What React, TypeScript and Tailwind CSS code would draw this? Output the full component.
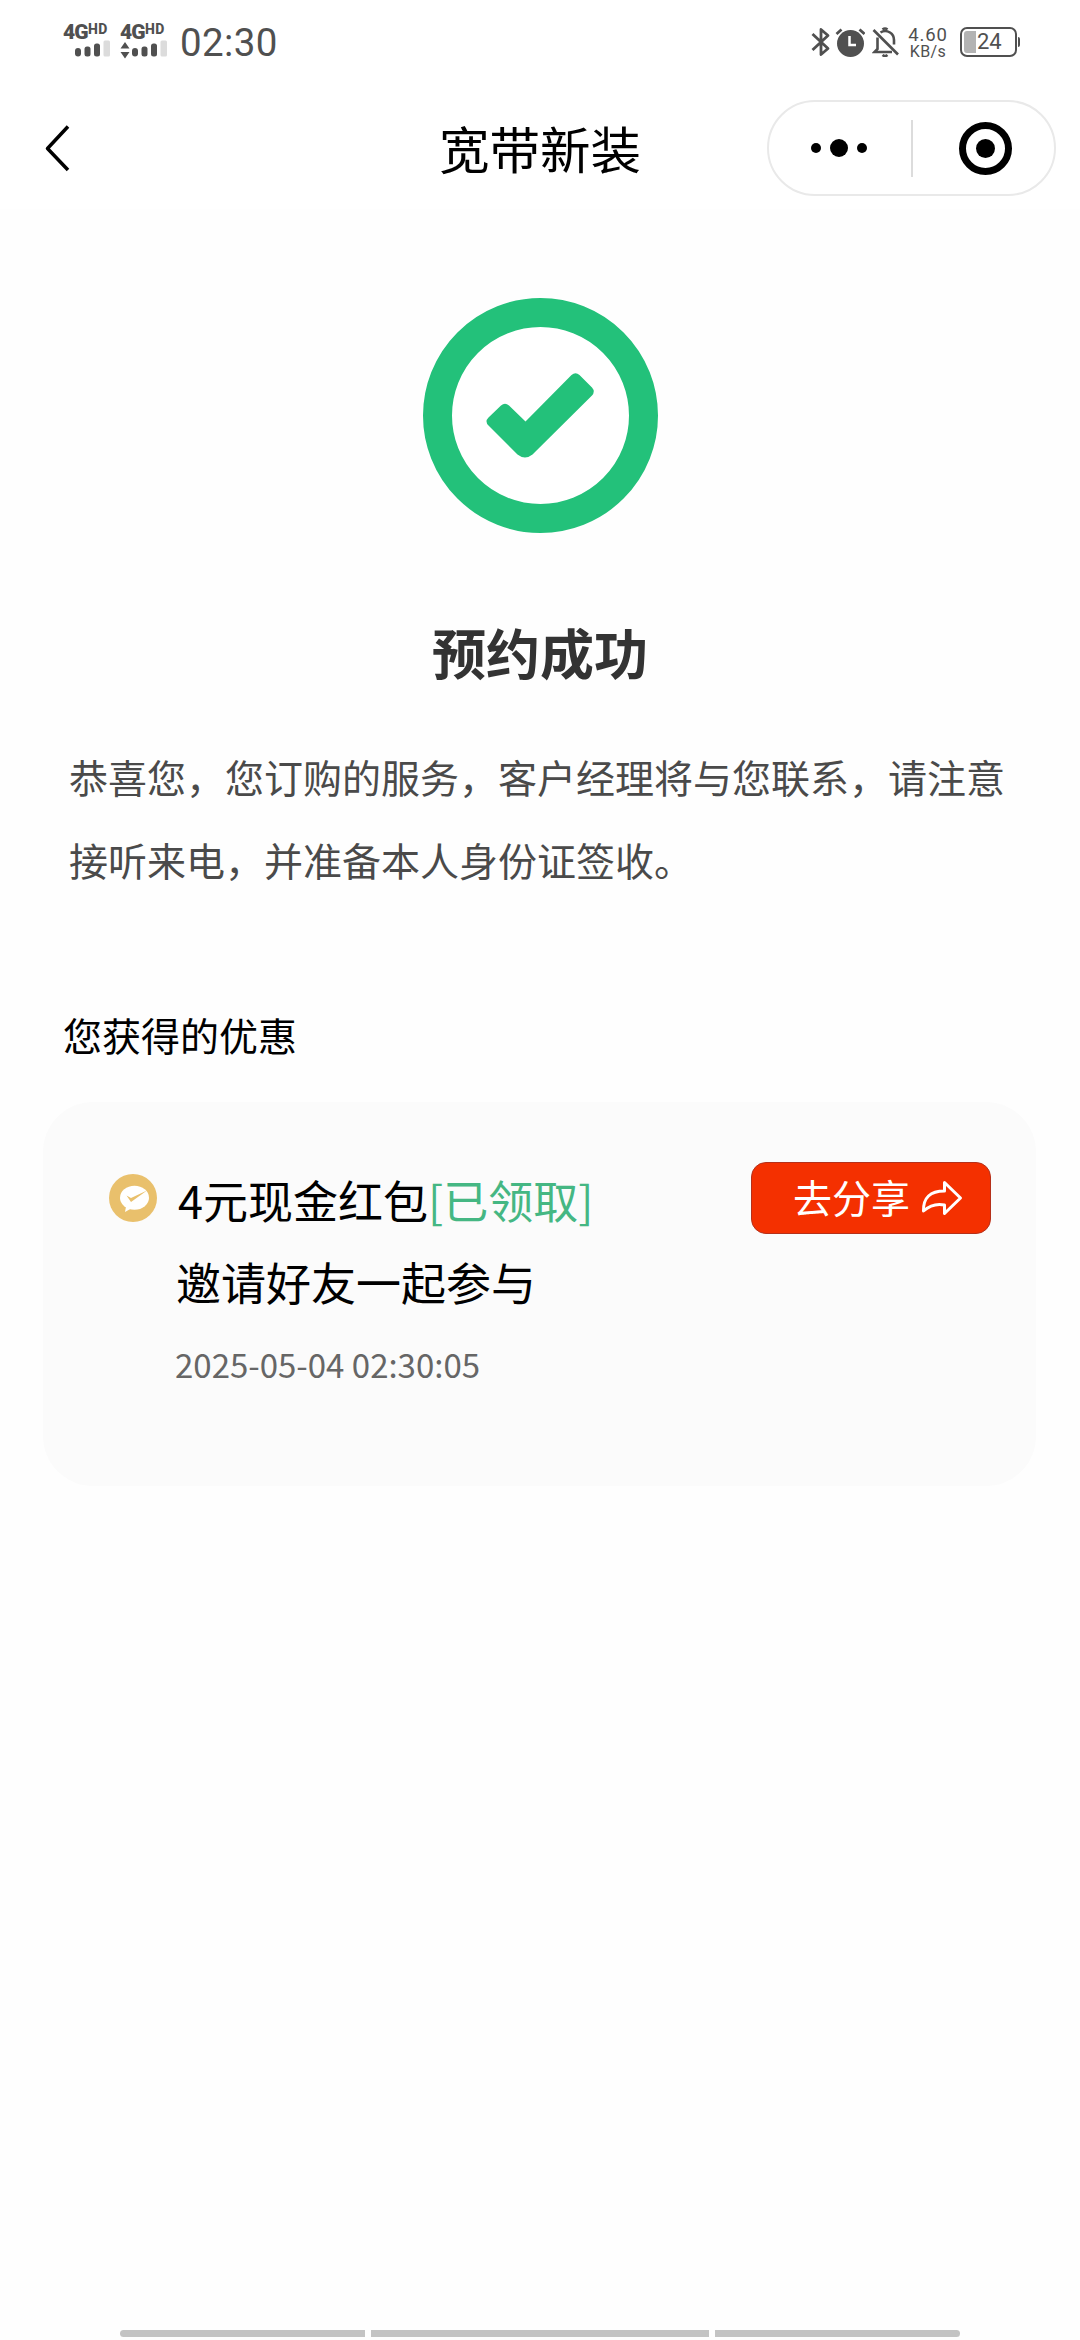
import React from 'react';

interface Coupon {
  title: string;
  status: string;
  description: string;
  time: string;
}

const coupons: Coupon[] = [
  {
    title: '4元现金红包',
    status: '[已领取]',
    description: '邀请好友一起参与',
    time: '2025-05-04 02:30:05',
  },
];

function Signal({ active = false }: { active?: boolean }) {
  return (
    <div className="w-[48px] h-[36px] flex flex-col font-['Roboto'] text-[#505050]">
      <div className="flex items-start h-[17px] leading-none">
        <span className="text-[21px] leading-[19px] tracking-[-0.8px] font-black">4G</span>
        <span className="text-[14px] leading-[13px] tracking-[0.6px] font-extrabold">HD</span>
      </div>
      <svg viewBox="0 0 48 19" className="w-[48px] h-[19px]" fill="#505050">
        {active && <path d="M5 2l4.500 6.500h-9zM5 18.500l4.500-6.500h-9z" />}
        <rect x="12" y="8" width="6" height="8.500" rx="3" />
        <rect x="21.500" y="6.500" width="6" height="10" rx="2.500" />
        <rect x="31" y="3.500" width="6" height="13" rx="2.500" />
        <rect x="40.500" y="0.500" width="6.500" height="16" rx="1.500" fill="#dcdcdc" />
      </svg>
    </div>
  );
}

function StatusBar() {
  return (
    <div className="h-[84px] flex items-start justify-between pl-[63px] pr-[60px] font-['Roboto'] text-[#505050]">
      <div className="flex items-start pt-[23px]">
        <Signal />
        <div className="w-[9px]" />
        <Signal active />
        <span className="ml-[12px] text-[38.500px] leading-[40px] tracking-[0.4px]">02:30</span>
      </div>

      <div className="flex items-start pt-[27px]">
        <svg viewBox="0 0 20 30" className="w-[20px] h-[30px]" fill="none" stroke="#505050" strokeWidth="2.800">
          <path d="M1.500 7L17 21.500l-7 6V2.500l7 6L1.500 23" strokeLinejoin="round" />
        </svg>
        <svg viewBox="0 0 30 30" className="ml-[4px] w-[30px] h-[30px]" fill="none" stroke="#505050">
          <circle cx="15.500" cy="16.500" r="13.500" fill="#505050" stroke="none" />
          <path d="M1.500 7l5-4.500M29.500 7l-5-4.500" strokeWidth="2.800" />
          <path d="M14.500 9v9h6.500" stroke="#fff" strokeWidth="2.500" />
        </svg>
        <svg viewBox="0 0 28 30" className="ml-[7px] w-[28px] h-[30px]" fill="none" stroke="#505050" strokeWidth="2.600">
          <path d="M1.500 3L26 27.500" />
          <path d="M5.500 10.500V22L2.500 25H20M8.500 5.500Q13 2.500 18 5.500Q22 8 22 13v4.500" />
          <path d="M10.500 2.500q2.500-2 5 0M10.500 28q2.500 2 5 0" />
        </svg>
        <div className="ml-[7px] w-[42px] flex flex-col items-center">
          <span className="text-[18.500px] leading-[16px] tracking-[0.8px]">4.60</span>
          <span className="text-[16px] leading-[18px] tracking-[0.4px]">KB/s</span>
        </div>
        <div className="ml-[11px] flex items-center h-[30px]">
          <div className="w-[57px] h-[30px] rounded-[7px] border-2 border-[#505050] flex items-center p-[2px]">
            <div className="w-[12px] h-[22px] rounded-l-[3px] bg-[#b3b3b3]" />
            <span className="ml-[1px] text-[22px] leading-[22px]">24</span>
          </div>
          <div className="ml-[1px] w-[2px] h-[10px] rounded-r bg-[#505050]" />
        </div>
      </div>
    </div>
  );
}

function NavBar() {
  return (
    <div className="h-[125px] grid grid-cols-[1fr_auto_1fr] items-start">
      <svg viewBox="0 0 30 50" className="ml-[43px] mt-[39px] w-[30px] h-[50px]" fill="none" stroke="#000" strokeWidth="3.500">
        <path d="M25 3.500L4.500 25.500L25 47" strokeLinejoin="round" />
      </svg>
      <h1 className="mt-[27px] text-[50.500px] leading-[72px] text-black">宽带新装</h1>
      <div className="justify-self-end mr-[24px] mt-[16px] w-[289px] h-[96px] rounded-full border-2 border-[#e9e9e9] bg-white flex items-center">
        <div className="w-[140px] flex items-center justify-center gap-[9px]">
          <span className="w-[10px] h-[10px] rounded-full bg-black" />
          <span className="w-[18px] h-[18px] rounded-full bg-black" />
          <span className="w-[10px] h-[10px] rounded-full bg-black" />
        </div>
        <div className="ml-[2px] w-[2px] h-[57px] bg-[#dcdcdc]" />
        <div className="ml-[46px] w-[53px] h-[53px] rounded-full border-[7px] border-black flex items-center justify-center">
          <span className="w-[19px] h-[19px] rounded-full bg-black" />
        </div>
      </div>
    </div>
  );
}

function SuccessIcon() {
  return (
    <svg viewBox="0 0 236 236" className="w-[236px] h-[236px]">
      <circle cx="118.500" cy="118.500" r="103" fill="#fff" stroke="#23c17a" strokeWidth="29" />
      <path
        d="M66.500 120.500L79 108.500q4-3.500 8 0L103.500 124.500L149.500 78q4-3.500 8 0L170 90.500q3.500 4 0 8L110.500 157.500q-7.500 6-15 0L66.500 128.500q-4-4 0-8z"
        fill="#23c17a"
      />
    </svg>
  );
}

function CouponRow({ coupon }: { coupon: Coupon }) {
  return (
    <div className="flex items-start">
      <svg viewBox="0 0 48 48" className="mt-[12px] w-[48px] h-[48px] shrink-0">
        <circle cx="24" cy="24" r="24" fill="#e9c06c" />
        <ellipse cx="25.500" cy="23.700" rx="14.500" ry="12" fill="#fff" />
        <path d="M17.500 30L16 38l7-4z" fill="#fff" />
        <path d="M17.500 21.500l4.500 2.500L38 16.500L22 28z" fill="#e9c06c" />
      </svg>
      <div className="-mt-[3px] ml-[19px] flex-1 text-[45px] leading-[82px] text-black">
        <div className="h-[82px] pl-[2px]">
          {coupon.title}
          <span className="text-[#45b783]">{coupon.status}</span>
        </div>
        <div className="h-[82px]">{coupon.description}</div>
        <div className="-ml-[1px] text-[33px] text-[#666]">{coupon.time}</div>
      </div>
      <button className="w-[240px] h-[72px] shrink-0 rounded-[15px] border border-[#b5301a] bg-[#f43000] flex items-center pl-[41px] text-white">
        <span className="-mt-[4px] text-[39px] leading-[56px]">去分享</span>
        <svg viewBox="0 0 42 36" className="ml-[11px] w-[42px] h-[36px]" fill="none" stroke="#fff" strokeWidth="3" strokeLinejoin="round">
          <path d="M23.500 2.500L39.500 18L23.500 33.500V25Q12 22.500 2.500 31Q2 11 23.500 11z" />
        </svg>
      </button>
    </div>
  );
}

export default function App() {
  return (
    <div className="w-[1080px] h-[2340px] flex flex-col bg-white overflow-hidden font-['Noto_Sans_CJK_SC',sans-serif]">
      <StatusBar />
      <NavBar />

      <main className="flex-1 flex flex-col bg-[#fefefe]">
        <div className="mt-[88px] flex justify-center">
          <SuccessIcon />
        </div>
        <h2 className="mt-[79px] text-center text-[54px] leading-[80px] font-bold text-[#333]">预约成功</h2>
        <p className="mt-[43px] pl-[69px] pr-[60px] text-[39px] leading-[83px] text-[#4a4a4a]">
          恭喜您，您订购的服务，客户经理将与您联系，请注意接听来电，并准备本人身份证签收。
        </p>

        <h3 className="mt-[103px] pl-[63px] text-[39px] leading-[60px] text-black">您获得的优惠</h3>
        <section className="mt-[38px] ml-[43px] w-[993px] h-[384px] rounded-[50px] bg-[#fbfbfb] pt-[60px] pl-[66px] pr-[45px]">
          {coupons.map((coupon) => (
            <CouponRow key={coupon.time} coupon={coupon} />
          ))}
        </section>

        {/* System navigation handle */}
        <div className="mt-auto mb-[3px] mx-[120px] flex gap-[6px]">
          <div className="w-[245px] h-[7px] rounded-l-full bg-[#c3c3c3]" />
          <div className="flex-1 h-[7px] bg-[#c3c3c3]" />
          <div className="w-[245px] h-[7px] rounded-r-full bg-[#c3c3c3]" />
        </div>
      </main>
    </div>
  );
}
